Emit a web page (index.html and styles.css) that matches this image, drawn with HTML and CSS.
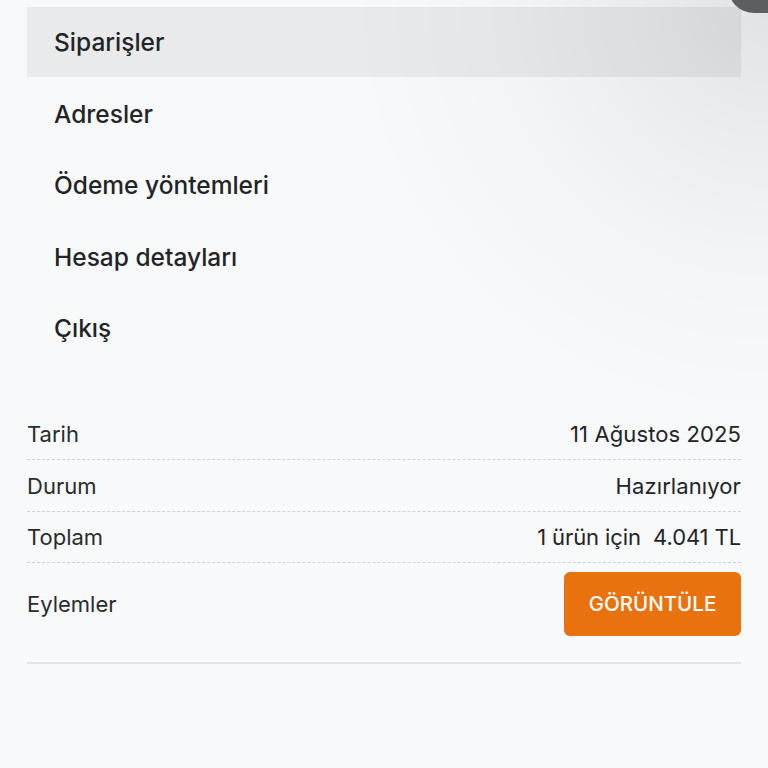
FILE: index.html
```html
<!DOCTYPE html>
<html lang="tr">
<head>
<meta charset="utf-8">
<title>Hesabım</title>
<link rel="stylesheet" href="styles.css">
</head>
<body>
<div class="page">
  <nav class="menu">
    <a class="menu-item active">Siparişler</a>
    <a class="menu-item">Adresler</a>
    <a class="menu-item">Ödeme yöntemleri</a>
    <a class="menu-item">Hesap detayları</a>
    <a class="menu-item">Çıkış</a>
  </nav>
  <div class="order">
    <div class="row"><span class="label">Tarih</span><span class="value">11 Ağustos 2025</span></div>
    <div class="row"><span class="label">Durum</span><span class="value">Hazırlanıyor</span></div>
    <div class="row"><span class="label">Toplam</span><span class="value tight">1 ürün için&nbsp; 4.041 TL</span></div>
    <div class="row last"><span class="label">Eylemler</span><a class="btn">GÖRÜNTÜLE</a></div>
  </div>
</div>
<div class="shade"></div>
<div class="fab"></div>
</body>
</html>
```
FILE: styles.css
```css
html, body {
  margin: 0;
  padding: 0;
  background: #f8f9fb;
  height: 100%;
}
body {
  font-family: Inter, "Noto Sans", sans-serif;
  color: #232427;
  overflow: hidden;
}
.page {
  padding: 7px 27px 0 27px;
}
.menu {
  display: flex;
  flex-direction: column;
}
.menu-item {
  display: flex;
  align-items: center;
  height: 70px;
  margin-bottom: 1.5px;
  padding-left: 27px;
  font-size: 24.5px;
  font-weight: 500;
  letter-spacing: 0;
  color: #232427;
}
.menu-item.active {
  background: #e9eaec;
}
.order {
  margin-top: 44px;
}
.row {
  display: flex;
  justify-content: space-between;
  align-items: center;
  padding: 12.5px 0 12px 0;
  line-height: 26px;
  font-size: 22px;
  border-bottom: 1px dashed #cfd2d6;
}
.label {
  font-weight: 400;
  color: #2a2b2e;
}
.value {
  font-weight: 400;
  color: #232427;
  letter-spacing: 0.1px;
}
.value.tight {
  letter-spacing: -0.1px;
}
.row.last {
  padding: 8.5px 0 26px 0;
  border-bottom: 2px solid #e1e3e6;
}
.btn {
  display: flex;
  align-items: center;
  justify-content: center;
  width: 177px;
  height: 64px;
  background: #e8720e;
  color: #fff;
  border-radius: 6px;
  font-size: 20.5px;
  font-weight: 500;
  letter-spacing: 0;
}
.shade {
  position: fixed;
  inset: 0;
  pointer-events: none;
  background: radial-gradient(circle at 100% 0, rgba(0,0,0,0.09) 0, rgba(0,0,0,0.05) 130px, rgba(0,0,0,0.02) 260px, rgba(0,0,0,0) 420px);
}
.fab {
  position: fixed;
  left: 728px;
  top: -40px;
  width: 80px;
  height: 53px;
  border-radius: 26px;
  background: #5d5e60;
}
```
